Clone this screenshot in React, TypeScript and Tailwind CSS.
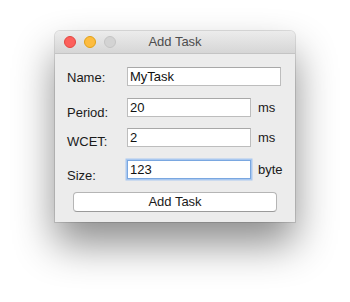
const font = { fontFamily: '"Liberation Sans", Arial, sans-serif' };

function Field({
  label,
  value,
  unit,
  labelShift,
  focused,
  wide,
}: {
  label: string;
  value: string;
  unit?: string;
  labelShift: string;
  focused?: boolean;
  wide?: boolean;
}) {
  return (
    <div className="flex h-[19px] items-start overflow-visible">
      <div className={`w-[60px] shrink-0 text-[13px] leading-4 text-[#1a1a1a] ${labelShift}`}>{label}</div>
      <div
        className={`h-[19px] shrink-0 ${wide ? "w-[154px]" : "w-[124px]"} bg-white px-[2px] text-[13px] leading-[17px] text-[#111] ${
          focused
            ? "border border-[#7aa7e0] shadow-[0_0_0_1.5px_#a9c8f0]"
            : "border border-[#bdbdbd] border-t-[#a8a8a8]"
        }`}
      >
        {value}
      </div>
      {unit && <div className="ml-[7px] pt-[2px] text-[13px] leading-4 text-[#1a1a1a]">{unit}</div>}
    </div>
  );
}

export default function App() {
  return (
    <div className="h-[302px] w-[350px] bg-white pl-[55px] pt-[31px]" style={font}>
      <div className="w-[240px] overflow-hidden rounded-t-[5px] bg-[#ececec] shadow-[0_22px_40px_rgba(0,0,0,0.45),0_0_0_1px_rgba(0,0,0,0.12)]">
        <div className="relative flex h-[23px] items-center border-b border-[#c4c4c4] bg-gradient-to-b from-[#ececec] to-[#d6d6d6]">
          <div className="flex gap-[8px] pl-[9px]">
            <span className="h-[12px] w-[12px] rounded-full border border-[#e2463f] bg-[#fc605c]" />
            <span className="h-[12px] w-[12px] rounded-full border border-[#e1a116] bg-[#fdbc40]" />
            <span className="h-[12px] w-[12px] rounded-full border border-[#c4c4c4] bg-[#d3d3d3]" />
          </div>
          <div className="absolute inset-0 flex items-center justify-center text-[13px] text-[#4d4d4d]">Add Task</div>
        </div>
        <div className="flex flex-col px-[12px] pt-[13px] pb-[10px]">
          <Field label="Name:" value="MyTask" labelShift="pt-[3px]" wide />
          <div className="mt-[12px]">
            <Field label="Period:" value="20" unit="ms" labelShift="pt-[7px]" />
          </div>
          <div className="mt-[11px]">
            <Field label="WCET:" value="2" unit="ms" labelShift="pt-[6px]" />
          </div>
          <div className="mt-[13px]">
            <Field label="Size:" value="123" unit="byte" labelShift="pt-[8px]" focused />
          </div>
          <button className="mx-[6px] mt-[13px] h-[20px] rounded-[4px] border border-[#b5b5b5] border-b-[#9a9a9a] bg-white text-[13px] leading-[18px] text-[#1a1a1a]">
            Add Task
          </button>
        </div>
      </div>
    </div>
  );
}
